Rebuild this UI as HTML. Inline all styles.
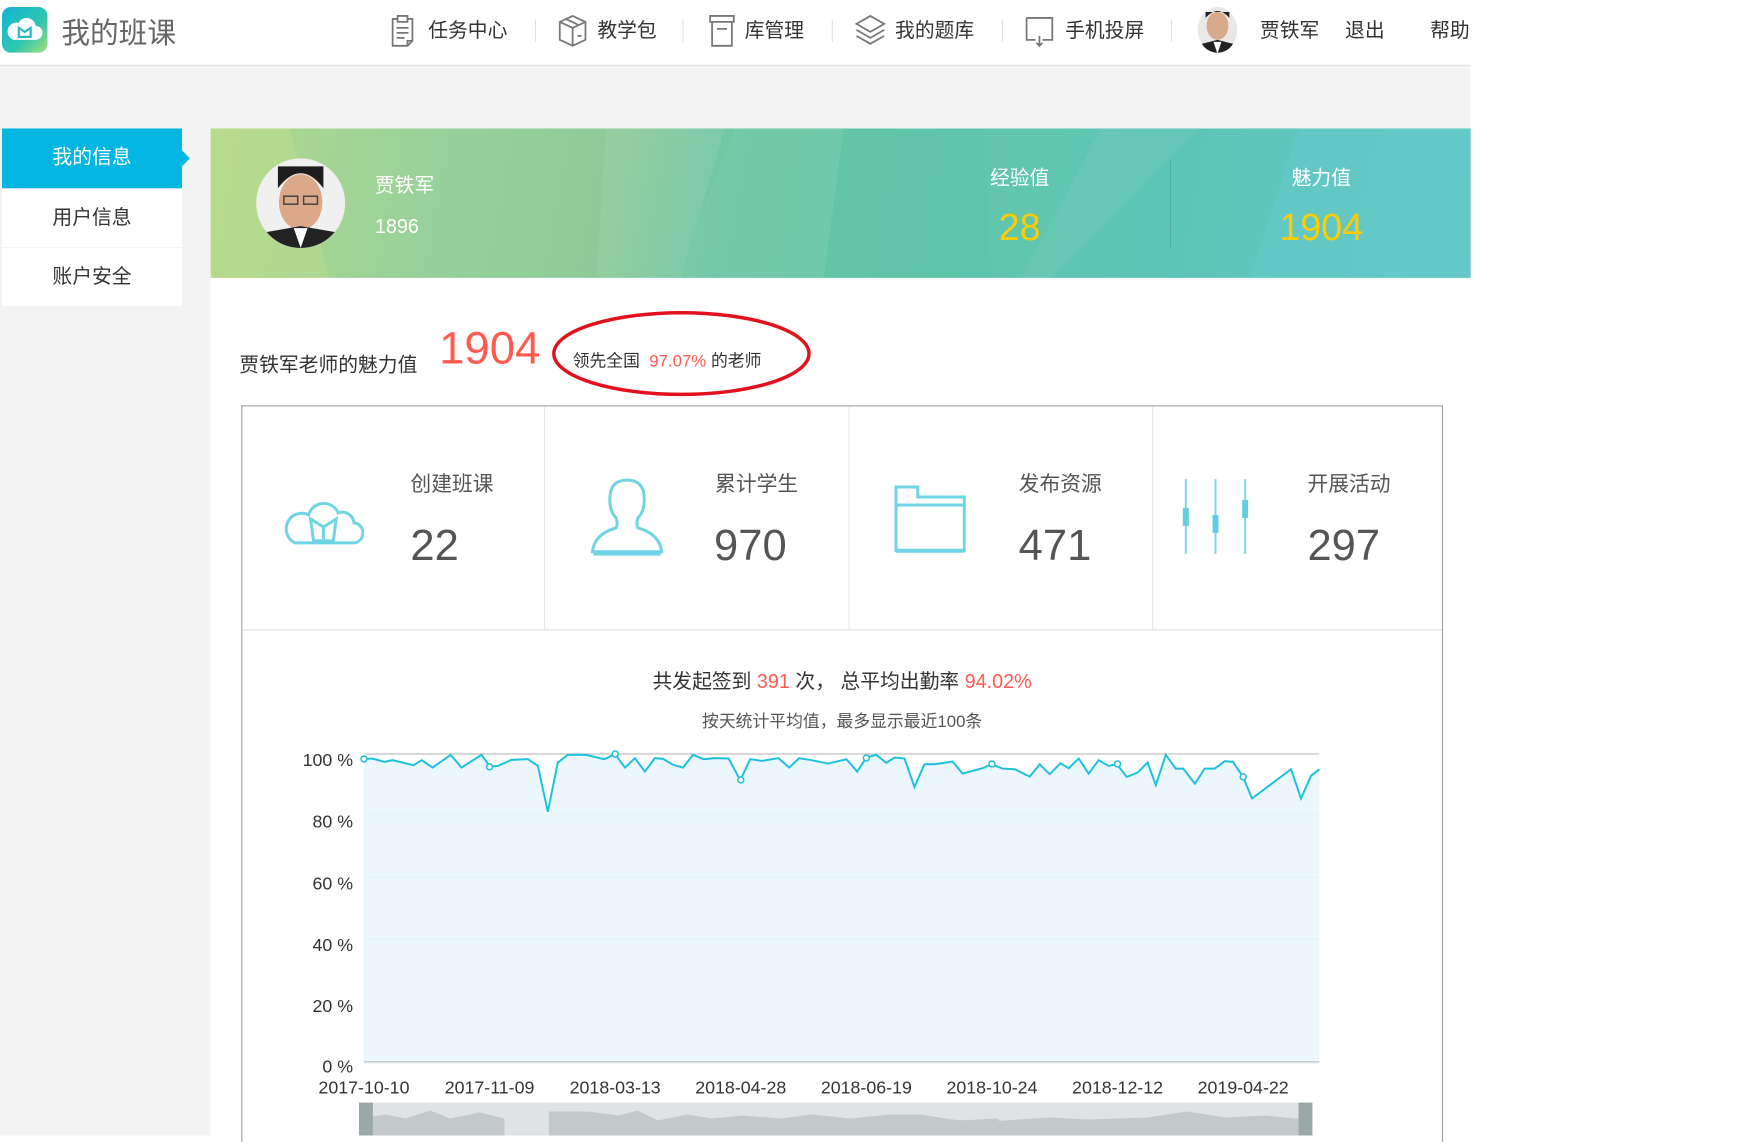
<!DOCTYPE html>
<html><head><meta charset="utf-8">
<style>
*{margin:0;padding:0;box-sizing:border-box}
body{width:1740px;height:1126px;position:relative;overflow:hidden;background:#fff;font-family:"Liberation Sans","Noto Sans CJK SC",sans-serif;color:#333}
#wrap{position:absolute;left:0;top:0;width:1740px;height:1140px;transform:scale(0.989,0.996);transform-origin:0 0}
.abs{position:absolute}
.hdr{left:0;top:0;width:1487px;height:67px;background:#fff;border-bottom:2px solid #e6e6e6}
.graybg{left:0;top:68px;width:1487px;height:1072px;background:#f3f3f3}
.nav{top:16px;font-size:20px;color:#333;white-space:nowrap;line-height:30px}
.sep{top:20px;width:1px;height:22px;background:#ddd}
.side{left:2px;width:182px;height:58px;background:#fff;font-size:20px;text-align:center;line-height:58px;color:#333}
.main{left:213px;top:129px;width:1274px;height:1011px;background:#fff}
.banner{left:213px;top:129px;width:1274px;height:150px;background:linear-gradient(100deg,#b2d98e 0%,#98d19a 18%,#8ccb99 32%,#6cc6a6 42%,#62c6ab 60%,#5cc5b6 75%,#63c9c6 100%);overflow:hidden}
.wt{color:#fff;font-size:20px}
.yl{color:#ffcc00;font-size:38px}
.lbl{font-size:21px;color:#555}
.num{font-size:44px;color:#555}
</style></head><body><div id="wrap">
<div class="abs hdr"></div>
<div class="abs graybg"></div>
<svg class="abs" style="left:2px;top:7px" width="46" height="46" viewBox="0 0 46 46">
<defs><linearGradient id="lg" x1="0" y1="0" x2="1" y2="1"><stop offset="0" stop-color="#12b3d6"/><stop offset="0.6" stop-color="#30c6b0"/><stop offset="1" stop-color="#a6df7a"/></linearGradient></defs>
<rect x="0" y="0" width="46" height="46" rx="9" fill="url(#lg)"/>
<path d="M12 33 h22 a7 7 0 0 0 0-14 a9 9 0 0 0-17-3 a7 7 0 0 0-5 17z" fill="#fff"/>
<path d="M17 21 l6 4 l6-4 v9 h-12z" fill="none" stroke="#2ab9c4" stroke-width="2.2"/>
</svg>
<div class="abs" style="left:62px;top:10px;font-size:29px;color:#666">我的班课</div>
<svg class="abs" style="left:393px;top:14px" width="28" height="34" viewBox="0 0 28 34" fill="none" stroke="#777" stroke-width="1.8"><path d="M4 5h5v-3h10v3h5v22l-5 5h-15z M9 5v3h10v-3 M8 14h12 M8 19h12 M8 24h8 M19 32v-5h5"/></svg>
<div class="abs nav" style="left:433px">任务中心</div>
<div class="abs sep" style="left:541px"></div>
<svg class="abs" style="left:564px;top:14px" width="30" height="34" viewBox="0 0 30 34" fill="none" stroke="#777" stroke-width="1.8"><path d="M15 2l13 6v18l-13 6l-13-6v-18z M2 8l13 6l13-6 M15 14v18 M8 5l13 6 M20 22h4"/></svg>
<div class="abs nav" style="left:604px">教学包</div>
<div class="abs sep" style="left:690px"></div>
<svg class="abs" style="left:716px;top:14px" width="28" height="34" viewBox="0 0 28 34" fill="none" stroke="#777" stroke-width="1.8"><path d="M2 2h24v6h-24z M4 8v24h20v-24 M9 15h10"/></svg>
<div class="abs nav" style="left:753px">库管理</div>
<div class="abs sep" style="left:841px"></div>
<svg class="abs" style="left:864px;top:14px" width="32" height="34" viewBox="0 0 32 34" fill="none" stroke="#777" stroke-width="1.8"><path d="M16 2l14 8l-14 8l-14-8z M2 16l14 8l14-8 M2 22l14 8l14-8"/></svg>
<div class="abs nav" style="left:905px">我的题库</div>
<div class="abs sep" style="left:1013px"></div>
<svg class="abs" style="left:1036px;top:16px" width="30" height="32" viewBox="0 0 30 32" fill="none" stroke="#777" stroke-width="1.8"><path d="M2 2h26v22h-10 M11 24h-9v-22 M15 20v10 M12 27l3 3l3-3"/></svg>
<div class="abs nav" style="left:1077px">手机投屏</div>
<div class="abs sep" style="left:1184px"></div>
<svg class="abs" style="left:1209px;top:6px" width="44" height="48" viewBox="0 0 44 48"><defs><clipPath id="c1"><ellipse cx="22" cy="24" rx="20" ry="23"/></clipPath></defs><g clip-path="url(#c1)"><rect width="44" height="48" fill="#e8e8e8"/><ellipse cx="22" cy="20" rx="11" ry="14" fill="#d9a98c"/><path d="M10 12q12-14 24 0v-6h-24z" fill="#222"/><path d="M0 48l6-10l16-4l16 4l6 10z" fill="#222"/><path d="M18 36l4 12l4-12z" fill="#fff"/></g></svg>
<div class="abs nav" style="left:1274px">贾铁军</div>
<div class="abs nav" style="left:1360px">退出</div>
<div class="abs nav" style="left:1446px">帮助</div>

<div class="abs side" style="top:129px;height:60px;background:#03b6e1;color:#fff">我的信息</div>
<div class="abs" style="left:184px;top:151px;width:0;height:0;border-left:8px solid #03b6e1;border-top:8px solid transparent;border-bottom:8px solid transparent"></div>
<div class="abs side" style="top:190px">用户信息</div>
<div class="abs side" style="top:249px">账户安全</div>

<div class="abs main"></div>
<div class="abs banner">
<svg width="1274" height="150" style="position:absolute;left:0;top:0">
<polygon points="0,0 80,0 120,150 0,150" fill="#c5df8a" opacity="0.35"/>
<polygon points="400,0 520,0 475,150 390,150" fill="#fff" opacity="0.07"/>
<polygon points="530,0 640,0 620,150 470,150" fill="#7fcfae" opacity="0.35"/>
<polygon points="640,0 780,0 790,150 620,150" fill="#58c2a6" opacity="0.35"/>
<polygon points="900,0 1000,0 850,150 820,150" fill="#fff" opacity="0.05"/>
<polygon points="1100,0 1274,0 1274,150 1050,150" fill="#6acbcc" opacity="0.4"/>
</svg>
</div>
<svg class="abs" style="left:259px;top:159px" width="90" height="90" viewBox="0 0 90 90"><defs><clipPath id="c2"><ellipse cx="45" cy="45" rx="45" ry="45"/></clipPath></defs><g clip-path="url(#c2)"><rect width="90" height="90" fill="#f0f0f0"/><ellipse cx="45" cy="44" rx="22" ry="28" fill="#dba88a"/><path d="M22 30q23-30 46 0v-22h-46z" fill="#1d1d1d"/><rect x="28" y="38" width="14" height="8" fill="none" stroke="#444" stroke-width="1.5"/><rect x="48" y="38" width="14" height="8" fill="none" stroke="#444" stroke-width="1.5"/><path d="M0 90l10-16l35-6l35 6l10 16z" fill="#222"/><path d="M38 70l7 20l7-20z" fill="#fff"/></g></svg>
<div class="abs wt" style="left:379px;top:170px">贾铁军</div>
<div class="abs wt" style="left:379px;top:217px">1896</div>
<div class="abs wt" style="left:981px;top:162px;width:100px;text-align:center">经验值</div>
<div class="abs yl" style="left:981px;top:208px;width:100px;text-align:center">28</div>
<div class="abs" style="left:1183px;top:161px;width:1px;height:89px;background:rgba(0,0,0,0.12)"></div>
<div class="abs wt" style="left:1286px;top:162px;width:100px;text-align:center">魅力值</div>
<div class="abs yl" style="left:1266px;top:208px;width:140px;text-align:center">1904</div>

<div class="abs" style="left:242px;top:350px;font-size:20px;color:#333">贾铁军老师的魅力值</div>
<div class="abs" style="left:444px;top:322px;font-size:46px;color:#ff5a4f">1904</div>
<div class="abs" style="left:579px;top:348px;font-size:17px;color:#333;white-space:nowrap">领先全国 &nbsp;<span style="color:#ff5a4f">97.07%</span> 的老师</div>
<svg class="abs" style="left:555px;top:309px" width="268" height="92"><ellipse cx="134" cy="46" rx="129" ry="41" fill="none" stroke="#e3101e" stroke-width="3.5"/></svg>

<div class="abs" style="left:244px;top:407px;width:1215px;height:740px;border:1.5px solid #999;border-bottom:none"></div>
<div class="abs" style="left:245px;top:632px;width:1213px;height:1px;background:#ddd"></div>
<div class="abs" style="left:550px;top:408px;width:1px;height:224px;background:#e6e6e6"></div>
<div class="abs" style="left:858px;top:408px;width:1px;height:224px;background:#e6e6e6"></div>
<div class="abs" style="left:1165px;top:408px;width:1px;height:224px;background:#e6e6e6"></div>

<svg class="abs" style="left:288px;top:493px" width="80" height="56" viewBox="0 0 80 56" fill="none" stroke="#6fd4e3" stroke-width="3"><path d="M10 52h58a10 10 0 0 0 2-20a12 12 0 0 0-16-10a16 16 0 0 0-30 2a14 14 0 0 0-14 28z"/><path d="M26 28l13 8l13-8l-3 22h-20z M39 36v14"/></svg>
<div class="abs lbl" style="left:415px;top:470px">创建班课</div>
<div class="abs num" style="left:415px;top:523px">22</div>

<svg class="abs" style="left:595px;top:480px" width="78" height="78" viewBox="0 0 78 78" fill="none" stroke="#6fd4e3" stroke-width="3"><path d="M28 40q-8-8-6-24q2-14 17-14q15 0 17 14q2 16-6 24q-2 6 0 10q22 6 24 24h-70q2-18 24-24q2-4 0-10z"/><path d="M5 76h68" stroke-width="4"/></svg>
<div class="abs lbl" style="left:723px;top:470px">累计学生</div>
<div class="abs num" style="left:722px;top:523px">970</div>

<svg class="abs" style="left:903px;top:485px" width="76" height="72" viewBox="0 0 76 72" fill="none" stroke="#6fd4e3" stroke-width="3"><path d="M3 68v-64h22v10h47v54z M3 22h69"/><path d="M3 68h69" stroke-width="4"/></svg>
<div class="abs lbl" style="left:1030px;top:470px">发布资源</div>
<div class="abs num" style="left:1030px;top:523px">471</div>

<svg class="abs" style="left:1190px;top:478px" width="80" height="82"><g stroke="#7fd6e4" stroke-width="2"><line x1="9" y1="3" x2="9" y2="78"/><line x1="39" y1="3" x2="39" y2="78"/><line x1="69" y1="3" x2="69" y2="78"/></g><g fill="#5fd0e0"><rect x="6" y="32" width="6" height="18"/><rect x="36" y="39" width="6" height="18"/><rect x="66" y="24" width="6" height="18"/></g></svg>
<div class="abs lbl" style="left:1322px;top:470px">开展活动</div>
<div class="abs num" style="left:1322px;top:523px">297</div>

<div class="abs" style="left:244px;top:668px;width:1215px;text-align:center;font-size:20px;color:#333">共发起签到 <span style="color:#ff5a4f">391</span> 次， 总平均出勤率 <span style="color:#ff5a4f">94.02%</span></div>
<div class="abs" style="left:244px;top:710px;width:1215px;text-align:center;font-size:17px;color:#555">按天统计平均值，最多显示最近100条</div>

<svg class="abs" style="left:0;top:0" width="1740" height="1140">
<g stroke="#dfe6ea" stroke-width="1.5">
<line x1="368" y1="819" x2="1334" y2="819"/><line x1="368" y1="881" x2="1334" y2="881"/><line x1="368" y1="943" x2="1334" y2="943"/><line x1="368" y1="1004" x2="1334" y2="1004"/>
</g>
<line x1="368" y1="757" x2="1334" y2="757" stroke="#ccc" stroke-width="1.5"/>
<g font-family="Liberation Sans, sans-serif" font-size="18" fill="#333" text-anchor="end">
<text x="357" y="769">100 %</text><text x="357" y="831">80 %</text><text x="357" y="893">60 %</text><text x="357" y="955">40 %</text><text x="357" y="1016">20 %</text><text x="357" y="1077">0 %</text>
</g>
<g font-family="Liberation Sans, sans-serif" font-size="18" fill="#333" text-anchor="middle">
<text x="368" y="1098">2017-10-10</text><text x="495" y="1098">2017-11-09</text><text x="622" y="1098">2018-03-13</text><text x="749" y="1098">2018-04-28</text><text x="876" y="1098">2018-06-19</text><text x="1003" y="1098">2018-10-24</text><text x="1130" y="1098">2018-12-12</text><text x="1257" y="1098">2019-04-22</text>
</g>
<g transform="translate(200,700) scale(0.8387,0.3364)">
<polygon fill="#e8f6fc" fill-opacity="0.85" points="200,1095 200,185 210,183 225,193 235,188 260,203 270,188 283,210 305,172 318,210 342,172 352,207 362,205 378,187 398,185 410,205 422,342 434,195 446,172 468,172 490,185 503,170 515,210 527,182 539,222 551,182 561,184 573,202 585,210 597,172 610,185 622,182 640,183 654,248 666,185 680,190 700,182 713,210 725,182 740,188 760,198 782,185 795,222 806,180 818,172 830,196 840,180 852,183 864,268 876,200 888,200 910,192 922,228 946,212 957,200 970,213 985,215 1003,237 1015,200 1027,230 1040,197 1050,212 1062,183 1074,228 1086,188 1098,205 1108,200 1120,238 1133,225 1145,195 1155,262 1167,172 1179,213 1188,213 1202,258 1214,213 1226,213 1238,191 1248,193 1260,237 1271,302 1318,215 1330,302 1342,235 1352,215 1352,1095"/>
<polyline fill="none" stroke="#1ec0df" stroke-width="2" vector-effect="non-scaling-stroke" points="200,185 210,183 225,193 235,188 260,203 270,188 283,210 305,172 318,210 342,172 352,207 362,205 378,187 398,185 410,205 422,342 434,195 446,172 468,172 490,185 503,170 515,210 527,182 539,222 551,182 561,184 573,202 585,210 597,172 610,185 622,182 640,183 654,248 666,185 680,190 700,182 713,210 725,182 740,188 760,198 782,185 795,222 806,180 818,172 830,196 840,180 852,183 864,268 876,200 888,200 910,192 922,228 946,212 957,200 970,213 985,215 1003,237 1015,200 1027,230 1040,197 1050,212 1062,183 1074,228 1086,188 1098,205 1108,200 1120,238 1133,225 1145,195 1155,262 1167,172 1179,213 1188,213 1202,258 1214,213 1226,213 1238,191 1248,193 1260,237 1271,302 1318,215 1330,302 1342,235 1352,215"/>
</g>
<line x1="368" y1="1066" x2="1334" y2="1066" stroke="#ccc" stroke-width="1.5"/>
<g fill="#fff" stroke="#1ec0df" stroke-width="1.5">
<circle cx="368" cy="762" r="3"/><circle cx="495" cy="770" r="3"/><circle cx="622" cy="757" r="3"/><circle cx="749" cy="783" r="3"/><circle cx="876" cy="761" r="3"/><circle cx="1003" cy="767" r="3"/><circle cx="1130" cy="767" r="3"/><circle cx="1257" cy="780" r="3"/>
</g>
<rect x="363" y="1107" width="964" height="35" fill="#dfe3e6"/>
<path d="M370 1140 v-18 l20 -3 l20 4 l25 -8 l20 8 l30 -6 l25 6 v17 z M555 1140 v-24 l40 0 l30 4 l20 -5 l20 10 l30 -6 l25 4 l30 -3 l40 3 l30 -4 l40 4 l40 -4 l30 0 l40 6 l40 -2 v17 z M930 1140 v-12 l30 -4 l40 2 l60 -4 l40 2 l60 -2 l40 -6 l40 6 l40 -2 l40 4 v16 z" fill="#c3c8cb"/>
<rect x="363" y="1107" width="14" height="35" fill="#9aa8a8"/>
<rect x="1313" y="1107" width="14" height="35" fill="#9aa8a8"/>
</svg>
</div></body></html>
